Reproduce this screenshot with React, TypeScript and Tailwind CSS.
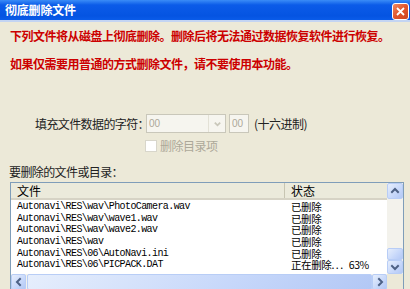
import type { ReactNode } from "react";

const CJK = "font-['SimSun','Noto_Sans_CJK_SC',sans-serif]";

const rows = [
  { path: "Autonavi\\RES\\wav\\PhotoCamera.wav", status: "已删除" },
  { path: "Autonavi\\RES\\wav\\wave1.wav", status: "已删除" },
  { path: "Autonavi\\RES\\wav\\wave2.wav", status: "已删除" },
  { path: "Autonavi\\RES\\wav", status: "已删除" },
  { path: "Autonavi\\RES\\06\\AutoNavi.ini", status: "已删除" },
  { path: "Autonavi\\RES\\06\\PICPACK.DAT", status: "正在删除. . .   63%" },
];

function Chevron({ dir }: { dir: "up" | "down" | "left" | "right" }) {
  const d = {
    up: "M2 6 L5 3 L8 6",
    down: "M2 4 L5 7 L8 4",
    left: "M6 2 L3 5 L6 8",
    right: "M4 2 L7 5 L4 8",
  }[dir];
  return (
    <svg width="10" height="10" viewBox="0 0 10 10">
      <path d={d} fill="none" stroke="#4d6185" strokeWidth="2" strokeLinecap="square" />
    </svg>
  );
}

function ScrollButton({ children, className }: { children?: ReactNode; className: string }) {
  return (
    <div
      className={`flex items-center justify-center rounded-[2px] border border-[#b8cdf6] bg-[linear-gradient(135deg,#e6eefc_0%,#c6d7fa_60%,#b3c8f5_100%)] ${className}`}
    >
      {children}
    </div>
  );
}

export default function App() {
  return (
    <div className={`w-[410px] h-[289px] overflow-hidden bg-[#ece9d8] ${CJK} text-black`}>
      <div className="h-[20px] flex items-center justify-between pl-[5px] pr-[1px] bg-[linear-gradient(to_bottom,#3a8cf7_0%,#0b5be8_25%,#0554e2_80%,#0a5ce9_100%)]">
        <span className="text-white text-[12px] font-bold leading-none tracking-[-0.2px]">彻底删除文件</span>
        <div className="w-[17px] h-[17px] mt-[2px] rounded-[3px] border border-white bg-[linear-gradient(135deg,#f08a64_0%,#e1552c_50%,#cc4422_100%)] flex items-center justify-center">
          <svg width="9" height="9" viewBox="0 0 9 9">
            <path d="M1 1 L8 8 M8 1 L1 8" stroke="#fff" strokeWidth="1.8" />
          </svg>
        </div>
      </div>
      <div className="h-[2px] bg-[#c3d4f2]" />

      <div className="pl-[10px] pt-[7px]">
        <div className="h-[14px] leading-[14px] text-[12px] font-bold text-[#cc0000] tracking-[-0.5px] whitespace-nowrap">
          下列文件将从磁盘上彻底删除。删除后将无法通过数据恢复软件进行恢复。
        </div>
        <div className="mt-[14px] h-[14px] leading-[14px] text-[12px] font-bold text-[#cc0000] tracking-[-0.5px] whitespace-nowrap">
          如果仅需要用普通的方式删除文件，请不要使用本功能。
        </div>

        <div className="mt-[43px] flex items-center h-[19px]">
          <span className="ml-[25px] w-[111px] text-[12px] leading-none tracking-[-0.6px] text-[#222] whitespace-nowrap">填充文件数据的字符：</span>
          <div className="flex h-[19px] w-[80px] border border-[#c9c7ba] bg-[#f6f5ef]">
            <span className="flex-1 pl-[2px] text-[10px] leading-[17px] text-[#aca899] font-['Liberation_Sans',sans-serif]">00</span>
            <div className="w-[17px] h-[17px] border-l border-[#e3e1d6] flex items-center justify-center">
              <svg width="9" height="9" viewBox="0 0 10 10">
                <path d="M2 4 L5 7 L8 4" fill="none" stroke="#c9c7ba" strokeWidth="2" />
              </svg>
            </div>
          </div>
          <div className="ml-[3px] h-[19px] w-[20px] border border-[#c9c7ba] bg-[#f6f5ef] pl-[2px] text-[10px] leading-[17px] text-[#aca899] font-['Liberation_Sans',sans-serif]">
            00
          </div>
          <span className="ml-[5px] text-[12px] leading-none tracking-[-0.5px] text-[#222] whitespace-nowrap">(十六进制)</span>
        </div>

        <div className="mt-[7px] flex items-center h-[12px]">
          <div className="ml-[135px] w-[12px] h-[12px] border border-[#d8d6cb] bg-white" />
          <span className="ml-[3px] text-[12px] leading-none tracking-[-0.5px] text-[#aca899] whitespace-nowrap">删除目录项</span>
        </div>

        <div className="mt-[13px] h-[14px] leading-[14px] text-[12px] tracking-[-0.6px] text-[#222] -ml-[1px] whitespace-nowrap">要删除的文件或目录：</div>

        <div className="mt-[3px] w-[394px] h-[120px] border border-[#7f9db9] bg-white flex flex-col">
          <div className="h-[91px] flex">
            <div className="flex-1">
              <div className="h-[17px] flex bg-[#ebeadb] border-b-2 border-[#d6d3c5] text-[12px] leading-[15px]">
                <div className="w-[274px] pl-[6px] border-r border-[#c7c5b2]">文件</div>
                <div className="flex-1 pl-[6px]">状态</div>
              </div>
              <div className="pt-[1px]">
                {rows.map((r) => (
                  <div key={r.path} className="h-[11.6px] flex items-center">
                    <span className="w-[275px] pl-[6px] text-[10px] leading-[11px] tracking-[-0.6px] font-['Liberation_Mono',monospace] whitespace-nowrap">
                      {r.path}
                    </span>
                    <span className="pl-[5px] text-[10.5px] leading-[11px] tracking-[-0.4px] whitespace-pre">{r.status}</span>
                  </div>
                ))}
              </div>
            </div>
            <div className="w-[16px] flex flex-col bg-[#f3f2ec]">
              <ScrollButton className="w-[16px] h-[16px]">
                <Chevron dir="up" />
              </ScrollButton>
              <div className="flex-1" />
              <ScrollButton className="w-[16px] h-[12px]" />
              <ScrollButton className="w-[16px] h-[14px]">
                <Chevron dir="down" />
              </ScrollButton>
            </div>
          </div>
          <div className="h-[16px] flex bg-[#f3f2ec]">
            <ScrollButton className="w-[15px] h-[16px]">
              <Chevron dir="left" />
            </ScrollButton>
            <ScrollButton className="flex-1 h-[16px] ml-[1px]" />
            <ScrollButton className="w-[15px] h-[16px]">
              <Chevron dir="right" />
            </ScrollButton>
            <div className="w-[16px] h-[16px] bg-[#ece9d8]" />
          </div>
        </div>
      </div>
    </div>
  );
}
